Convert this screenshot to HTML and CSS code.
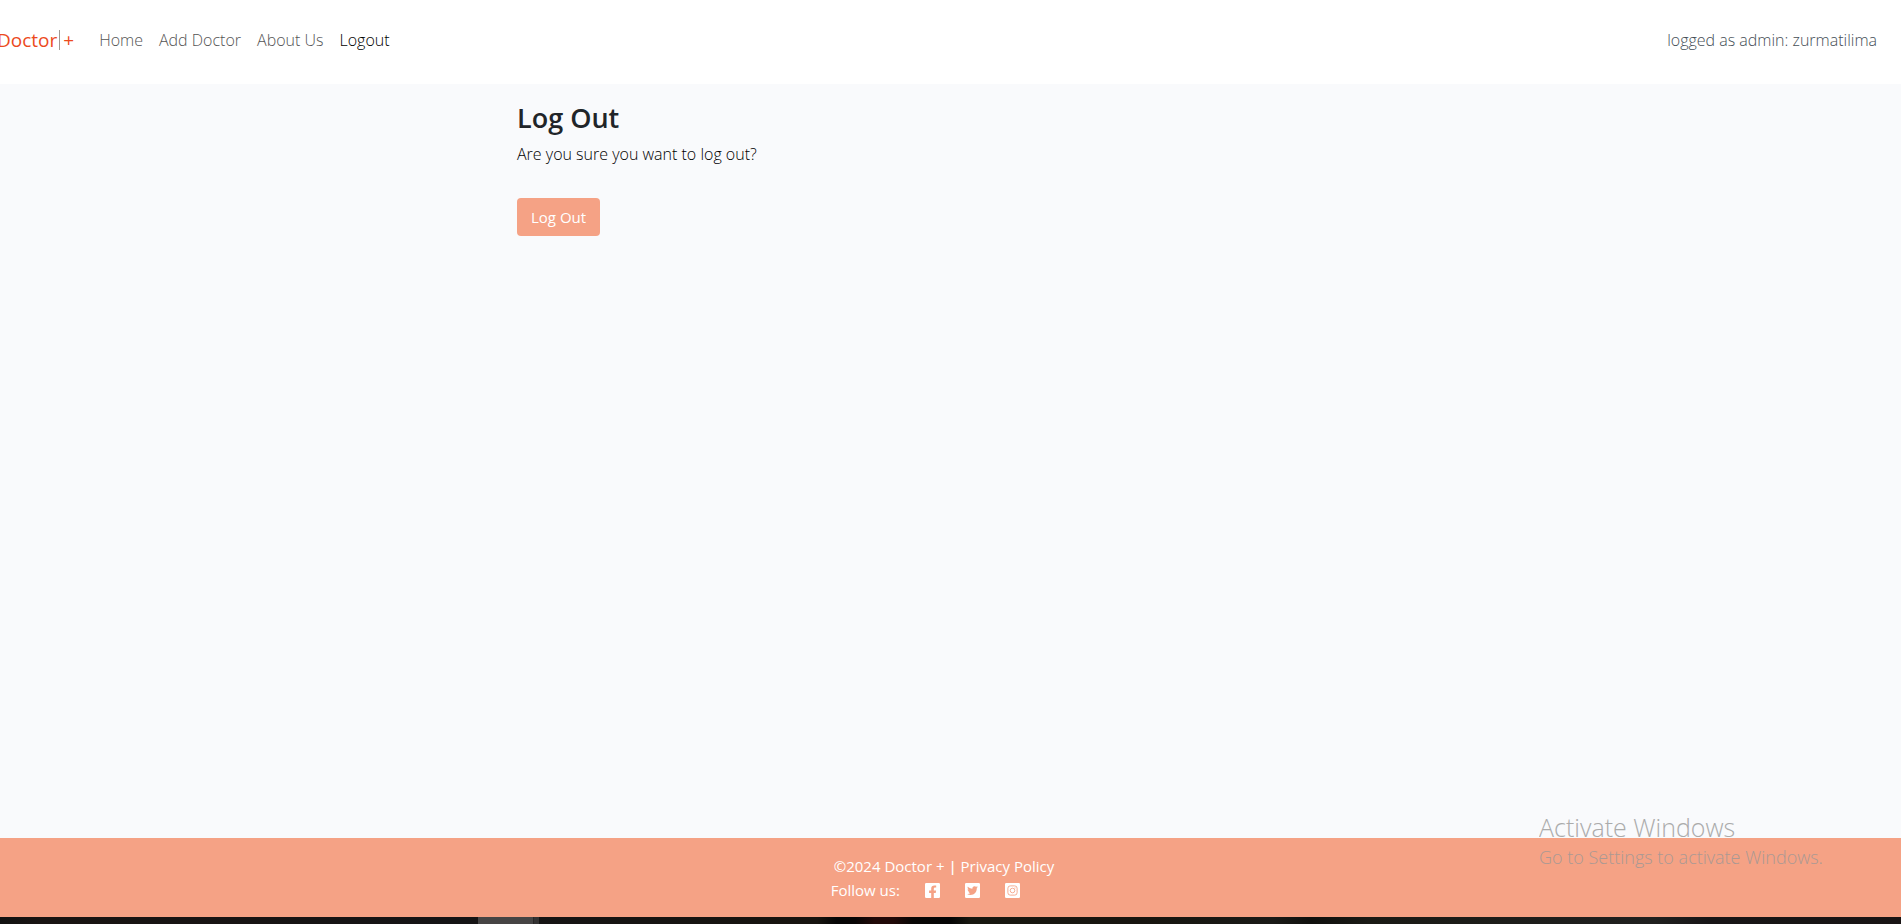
FILE: index.html
```html
<!DOCTYPE html>
<html lang="en">
<head>
<meta charset="utf-8">
<title>Log Out - Doctor+</title>
<link rel="stylesheet" href="styles.css">
</head>
<body>
<header class="navbar">
  <a class="brand" href="#"><span>Doctor</span><span class="brand-bar"></span><span>+</span></a>
  <nav class="nav-links">
    <a href="#">Home</a>
    <a href="#">Add Doctor</a>
    <a href="#">About Us</a>
    <a class="active" href="#">Logout</a>
  </nav>
  <span class="user">logged as admin: zurmatilima</span>
</header>
<main class="content">
  <h1>Log Out</h1>
  <p>Are you sure you want to log out?</p>
  <form><button class="btn" type="button">Log Out</button></form>
</main>
<footer class="footer">
  <div class="footer-inner">
    <div class="legal">©2024 Doctor + <b>|</b> <a href="#">Privacy Policy</a></div>
    <div class="social">
      <span class="follow">Follow us:</span>
      <a href="#" aria-label="Facebook"><svg viewBox="0 0 448 448"><path fill="currentColor" fill-rule="evenodd" d="M412 0H36A36 36 0 0 0 0 36v376a36 36 0 0 0 36 36h149V296h-63v-72h63v-55c0-62 37-97 94-97 27 0 55 5 55 5v61h-31c-31 0-40 19-40 38v48h68l-11 72h-57v152h149a36 36 0 0 0 36-36V36a36 36 0 0 0-36-36z"/></svg></a>
      <a href="#" aria-label="Twitter"><svg viewBox="0 0 448 448"><path fill="currentColor" fill-rule="evenodd" d="M412 0H36A36 36 0 0 0 0 36v376a36 36 0 0 0 36 36h376a36 36 0 0 0 36-36V36a36 36 0 0 0-36-36zM351 159c0 3 0 6 0 9 0 87-66 187-187 187-37 0-72-11-101-29 36 4 70-6 97-28-29 0-53-19-61-45 10 1 19 1 30-1-31-6-53-33-53-65v-1c9 5 19 8 30 8a66 66 0 0 1-21-87c32 40 81 66 136 68-9-45 25-81 65-81 19 0 36 8 48 21 15-3 29-8 42-16-5 15-15 28-29 36 13-1 26-5 38-10-9 13-20 25-33 34z"/></svg></a>
      <a href="#" aria-label="Instagram"><svg viewBox="0 0 448 448"><rect width="448" height="448" rx="36" fill="currentColor"/><g class="cutout"><rect x="86" y="86" width="276" height="276" rx="72"/><circle cx="224" cy="224" r="69"/><circle cx="298" cy="150" r="5"/></g></svg></a>
    </div>
  </div>
</footer>
<div class="taskbar"></div>
<aside class="watermark">
  <div class="watermark-title">Activate Windows</div>
  <div class="watermark-text">Go to Settings to activate Windows.</div>
</aside>
</body>
</html>
```
FILE: styles.css
```css
* { box-sizing: border-box; }

body {
  margin: 0;
  min-height: 100vh;
  display: flex;
  flex-direction: column;
  overflow-x: hidden;
  background: #f9fafc;
  color: #212529;
  font: 300 16px/24px "Open Sans", "Noto Sans", sans-serif;
}

a { color: inherit; text-decoration: none; }

.navbar {
  display: flex;
  align-items: center;
  padding: 20px 24px 24px 0;
  background: #fff;
}

.brand {
  display: flex;
  align-items: center;
  margin-left: -3px;
  color: #ec4a1d;
  font-size: 19px;
  font-weight: 400;
}

.brand-bar {
  width: 1px;
  height: 20px;
  margin: 0 3px 0 2px;
  background: #a09a94;
}

.nav-links {
  display: flex;
  margin-left: 17px;
}

.nav-links a {
  padding: 8px;
  color: #555;
}

.nav-links .active { color: #000; }

.user {
  margin-left: auto;
  color: #454e56;
}

.content {
  flex: 1;
  width: 100%;
  max-width: 867px;
  margin: 0 auto;
  padding-top: 17px;
}

h1 {
  margin: 0 0 7px;
  font-size: 27px;
  line-height: 34px;
  font-weight: 600;
}

p {
  margin: 0 0 32px;
  color: #000;
}

.btn {
  height: 38px;
  padding: 0 14px;
  border: 0;
  border-radius: 4px;
  background: #f5a285;
  color: #fff;
  font: inherit;
  font-weight: 400;
}

.footer {
  display: flex;
  justify-content: center;
  padding: 16px 16px 15px 0;
  background: #f5a285;
  color: #fff;
  font-weight: 400;
}

.legal { padding-left: 3px; }

.legal b { font-weight: 600; }

.social {
  display: flex;
  align-items: center;
  gap: 25px;
}

.social a { display: flex; }

.social svg {
  width: 15px;
  height: 15px;
}

.cutout {
  fill: none;
  stroke: #f5a285;
  stroke-width: 26px;
}

.btn, .footer { font-size: 15px; }

.taskbar {
  height: 7px;
  background: linear-gradient(90deg, transparent 478px, #464444 478px 533px, #292727 533px 534px, #343232 534px 539px, transparent 539px),
    linear-gradient(90deg, #111 0, #191412 2%, #151415 24%, #17140f 43%, #050505 44%, #080505 45%, #210908 46%, #210908 47%, #080605 48%, #050505 50%, #171710 51%, #17150f 60%, #1a1a17 67%, #10100d 69%, #1a1a15 72%, #20201f 87%, #171516 90%, #191414 100%);
}

.watermark {
  position: absolute;
  right: 78px;
  bottom: 54px;
  width: 284px;
  color: #989898;
  opacity: 0.8;
  white-space: nowrap;
  pointer-events: none;
}

.watermark-title {
  font-size: 25px;
  line-height: 34px;
}

.watermark-text {
  font-size: 18px;
  line-height: 26px;
}
```
